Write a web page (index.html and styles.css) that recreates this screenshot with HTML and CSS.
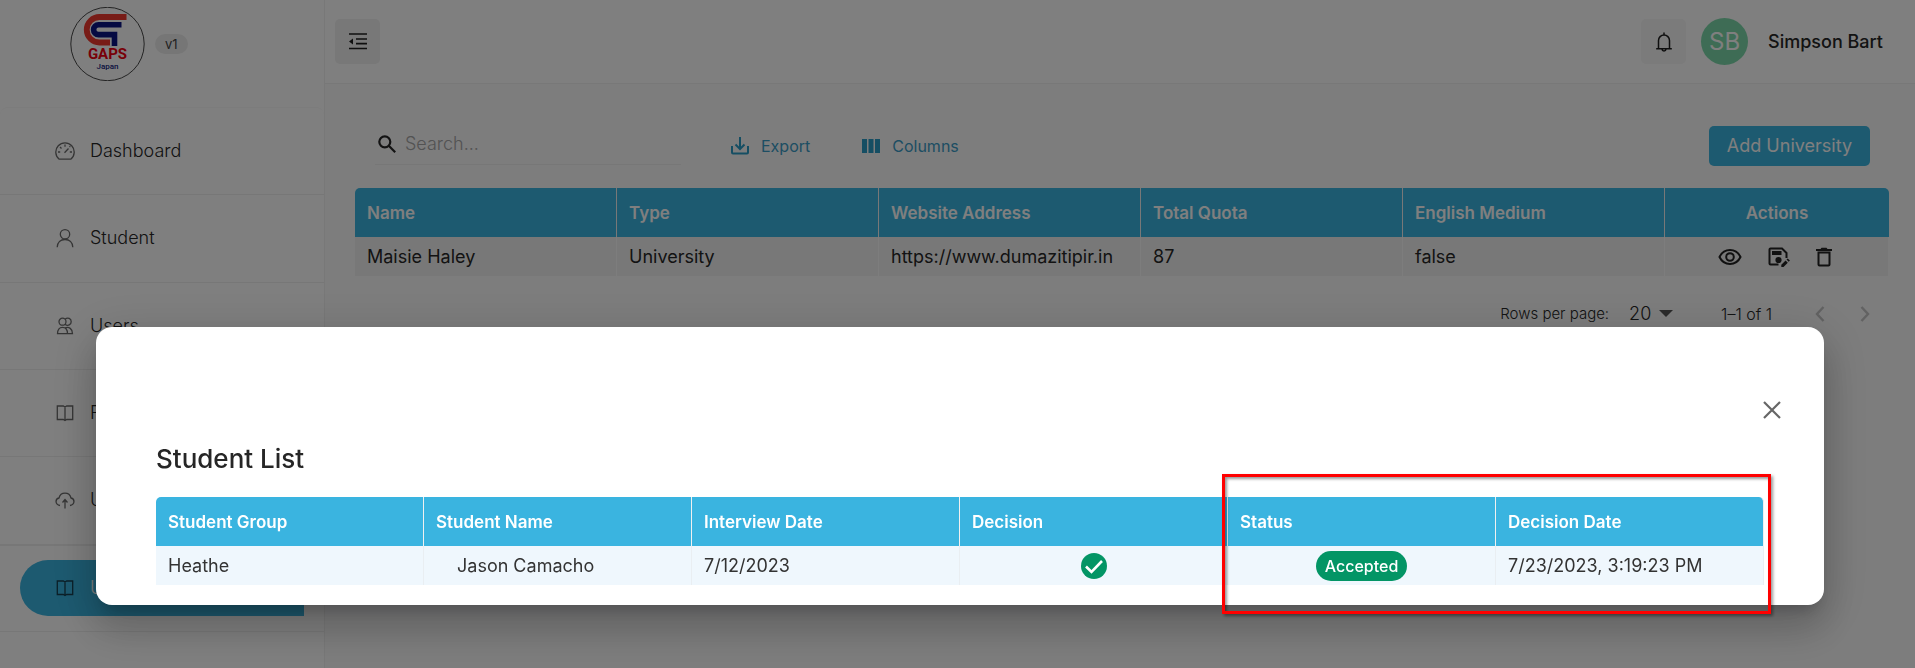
FILE: index.html
```html
<!DOCTYPE html>
<html lang="en">
<head>
<meta charset="utf-8">
<title>GAPS Japan - Universities</title>
<link rel="stylesheet" href="styles.css">
</head>
<body>
<div class="app">
  <aside class="sidebar">
    <div class="brand">
      <svg class="logo" viewBox="0 0 76 74" role="img" aria-label="GAPS Japan">
        <circle cx="37.500" cy="37" r="36.700" fill="none" stroke="#333" stroke-width="0.900"/>
        <path d="M56.500 10H29.500a12.700 12.700 0 0 0 0 25.500H40" fill="none" stroke="#f0392f" stroke-width="5.800"/>
        <path d="M51.500 17.800H28.500a4.800 4.800 0 0 0 0 9.800H44.500V39" fill="none" stroke="#0a1484" stroke-width="5.600"/>
        <text class="logo-name" x="37.500" y="52" text-anchor="middle">GAPS</text>
        <text class="logo-sub" x="37.500" y="62" text-anchor="middle">Japan</text>
      </svg>
      <span class="version">v1</span>
    </div>
    <nav>
      <ul class="menu">
        <li><a href="#"><svg class="ico" viewBox="0 0 20 20"><path d="M4.200 18.200A9.200 9.200 0 1 1 15.800 18.200Z"/><path d="M10 3.500v2.200M3 11h2.200M14.800 11H17M5 6l1.500 1.500M9.500 11.700l4-4.200M14.500 6l.8-.8"/></svg>Dashboard</a></li>
        <li><a href="#"><svg class="ico" viewBox="0 0 20 20"><circle cx="10" cy="6.300" r="4.700"/><path d="M2.200 19.200c.2-4.800 3.400-7.700 7.800-7.700s7.600 2.900 7.800 7.700"/></svg>Student</a></li>
        <li><a href="#"><svg class="ico" viewBox="0 0 20 20"><circle cx="7.500" cy="5.700" r="3.500"/><path d="M10 3.300c3-2.800 6.200-.3 6.200 2.400S13 10.800 10 8.200M2.500 17.700c0-4 1.700-6.300 5-6.300s5 2.300 5 6.300ZM10 11.900c4-1.400 7.500.8 7.500 5.800h-5"/></svg>Users</a></li>
        <li><a href="#"><svg class="ico" viewBox="0 0 20 20"><path d="M2.300 3h6l1.700 1 1.700-1h6v13.500h-6L10 17.500l-1.700-1h-6ZM10 4v13"/></svg>Faculty</a></li>
        <li><a href="#"><svg class="ico" viewBox="0 0 20 20"><path d="M5 15.500C-.2 14.500 0 9 4 8c1.500-6.500 10.500-6.500 12 0 4 1 4.200 6.500-1 7.500M10 18.500v-8M7.500 12.500l2.500-3 2.500 3"/></svg>Upload</a></li>
        <li class="current"><a href="#" aria-current="page"><svg class="ico" viewBox="0 0 20 20"><path d="M2.300 3h6l1.700 1 1.700-1h6v13.500h-6L10 17.500l-1.700-1h-6ZM10 4v13"/></svg>University</a></li>
      </ul>
    </nav>
  </aside>

  <div class="page">
    <header class="topbar">
      <button class="square collapse" aria-label="Collapse menu">
        <svg width="18" height="18" viewBox="0 0 18 18" fill="none" stroke="#1f1f1f" stroke-width="1.700"><path d="M0 1h18M7 6h11M7 10.700h11M0 15.500h18"/><path d="M0 8.400l4-3v6z" fill="#1f1f1f" stroke="none"/></svg>
      </button>
      <div class="account">
        <button class="square bell" aria-label="Notifications">
          <svg width="18" height="20" viewBox="0 0 18 20" fill="none" stroke="#1f1f1f" stroke-width="1.500"><path d="M1.200 16.800h15.600M3.500 16.800V8.500a5.500 5.500 0 0 1 11 0v8.300M9 3V.5M7 17.200c.2 2.400 3.800 2.400 4 0"/></svg>
        </button>
        <span class="avatar">SB</span>
        <span class="person">Simpson Bart</span>
      </div>
    </header>

    <main class="content">
      <div class="toolbar">
        <label class="search">
          <svg width="18" height="18" viewBox="0 0 18 18" fill="none" stroke="#262626" stroke-width="2.200"><circle cx="6.800" cy="6.800" r="5.500"/><path d="M10.800 10.800l6.400 6.400"/></svg>
          <input type="search" placeholder="Search..." aria-label="Search">
        </label>
        <div class="tools">
          <button class="tool"><svg width="18" height="18" viewBox="0 0 18 18" fill="none" stroke="currentColor" stroke-width="2"><path d="M1 9v6.500q0 1 1 1h14q1 0 1-1V9M9 0v11.500M4.500 7.500L9 12l4.500-4.500"/></svg>Export</button>
          <button class="tool"><svg width="18" height="18" viewBox="0 0 18 18" fill="currentColor"><path d="M0 2h5v14H0zM6.500 2h5v14h-5zM13 2h5v14h-5z"/></svg>Columns</button>
        </div>
        <button class="add">Add University</button>
      </div>

      <table class="grid universities">
        <thead><tr><th>Name</th><th>Type</th><th>Website Address</th><th>Total Quota</th><th>English Medium</th><th class="actions-col">Actions</th></tr></thead>
        <tbody><tr>
          <td>Maisie Haley</td><td>University</td><td>https://www.dumazitipir.in</td><td>87</td><td>false</td>
          <td><div class="actions">
            <button aria-label="View"><svg width="24" height="20" viewBox="0 0 24 20" fill="none" stroke="#222" stroke-width="2"><path d="M1.500 10C6 .7 18 .7 22.500 10 18 19.300 6 19.300 1.500 10Z"/><circle cx="12" cy="10" r="3.800"/></svg></button>
            <button aria-label="Edit"><svg width="22" height="22" viewBox="0 0 22 22"><path d="M10.500 18.500H2.500q-1 0-1-1v-14q0-1 1-1H14L18.500 7v5" fill="none" stroke="#222" stroke-width="2"/><path d="M4 5h9.500v4H4zM13.300 18.800v2.200h2.200l4.300-4.300-2.200-2.200zM18.500 13.600l1.200-1.200 2.200 2.200-1.200 1.200z" fill="#222"/><circle cx="10.500" cy="14" r="3.100" fill="#222"/></svg></button>
            <button aria-label="Delete"><svg width="16" height="20" viewBox="0 0 16 20"><path d="M0 2h4.500l1-1.200h5l1 1.200H16v2H0z" fill="#222"/><path d="M2.500 5.500h11v12q0 1-1 1h-9q-1 0-1-1z" fill="none" stroke="#222" stroke-width="2"/></svg></button>
          </div></td>
        </tr></tbody>
      </table>

      <div class="pager">
        <label for="page-size">Rows per page:</label>
        <span class="size">
          <select id="page-size"><option>20</option><option>50</option></select>
          <svg width="14" height="8" viewBox="0 0 14 8"><path d="M0 0h14L7 7z" fill="#555"/></svg>
        </span>
        <span class="range">1–1 of 1</span>
        <button aria-label="Previous page" disabled><svg width="10" height="16" viewBox="0 0 10 16"><path d="M8.500 1L2 8l6.500 7"/></svg></button>
        <button aria-label="Next page" disabled><svg width="10" height="16" viewBox="0 0 10 16"><path d="M1.500 1L8 8l-6.500 7"/></svg></button>
      </div>
    </main>
  </div>
</div>

<div class="backdrop">
  <section class="dialog" role="dialog" aria-modal="true" aria-labelledby="dialog-title">
    <button class="close" aria-label="Close"><svg width="18" height="18" viewBox="0 0 18 18"><path d="M1 1l16 16M17 1L1 17"/></svg></button>
    <h2 id="dialog-title">Student List</h2>
    <table class="grid students">
      <thead><tr><th>Student Group</th><th>Student Name</th><th>Interview Date</th><th>Decision</th><th>Status</th><th>Decision Date</th></tr></thead>
      <tbody><tr>
        <td>Heathe</td><td class="indent">Jason Camacho</td><td>7/12/2023</td>
        <td class="center"><svg class="check" viewBox="0 0 26 26" role="img" aria-label="Yes"><circle cx="13" cy="13" r="13" fill="#039565"/><path d="M5 13.500l5.500 5.500L21 8" fill="none" stroke="#fff" stroke-width="2.600"/></svg></td>
        <td class="center"><span class="pill">Accepted</span></td>
        <td>7/23/2023, 3:19:23 PM</td>
      </tr></tbody>
    </table>
    <div class="highlight"></div>
  </section>
</div>
</body>
</html>
```
FILE: styles.css
```css
* { box-sizing: border-box; }
body {
  margin: 0;
  font-family: Inter, "Liberation Sans", sans-serif;
  font-size: 18px;
  line-height: 24px;
  color: #262626;
  background: #fafafb;
  overflow: hidden;
}
button, input, select { font: inherit; color: inherit; }
button { border: 0; padding: 0; background: none; cursor: pointer; }
svg { display: block; flex: none; }

.app { display: flex; min-height: 100vh; }

.sidebar { flex: none; width: 325px; background: #fff; border-right: 1px solid #f0f0f0; }
.brand { display: flex; align-items: center; gap: 9px; padding: 7px 0 26px 70px; }
.logo { width: 76px; height: 74px; }
.logo-name { font: 700 15px Roboto, sans-serif; fill: #f00010; }
.logo-sub { font: 500 8px Roboto, sans-serif; fill: #141c80; }
.version { padding: 0 10px; border-radius: 10px; background: #ededed; font-size: 13px; line-height: 20px; color: #444; }

.menu {
  display: grid;
  grid-auto-rows: 1fr;
  min-height: 525px;
  margin: 0;
  padding: 0;
  list-style: none;
  border-top: 1px solid #f8f8f8;
  border-radius: 8px;
}
.menu li { display: grid; align-items: center; border-bottom: 1px solid #efefef; }
.menu a { display: flex; align-items: center; gap: 15px; padding: 16px 20px 16px 55px; color: #262626; font-weight: 300; text-decoration: none; }
.ico { width: 20px; height: 20px; fill: none; stroke: #6a6a6a; stroke-width: 1.3px; }
.menu .current { border-top: 1px solid #efefef; padding: 0 20px; }
.menu .current a { padding-left: 35px; border-radius: 28px 0 0 28px; background: #3ab4e0; color: #fff; }
.current .ico { stroke: #173f50; }

.page { flex: 1; min-width: 0; }
.topbar { display: flex; align-items: center; justify-content: space-between; height: 84px; padding: 0 32px 0 10px; background: #fff; border-bottom: 1px solid #f0f0f0; }
.square { display: grid; place-items: center; width: 45px; height: 45px; border-radius: 5px; }
.collapse { background: #f0f0f0; }
.bell { background: #f6f6f6; }
.account { display: flex; align-items: center; gap: 15px; }
.avatar { display: grid; place-items: center; width: 47px; height: 47px; border-radius: 50%; background: #7dd9aa; color: #fff; font-size: 24px; }
.person { margin-left: 5px; font-weight: 500; }

.content { padding: 42px 26px 20px 30px; }
.toolbar { display: flex; align-items: center; padding: 0 19px 0 20px; }
.search { display: flex; align-items: center; gap: 9px; width: 306px; height: 37px; padding: 0 3px 4px; border-bottom: 1px solid #eee; }
.search input { flex: 1; min-width: 0; border: 0; padding: 0; background: none; outline: 0; font-weight: 300; }
.search input::placeholder { color: #a6a6a6; opacity: 1; }
.tools { display: flex; gap: 52px; margin-left: 50px; }
.tool { display: flex; align-items: center; gap: 12px; color: #3a9cc6; font-size: 16px; }
.tool svg { color: #2b9dc6; }
.add { margin-left: auto; padding: 8px 18px; border-radius: 5px; background: #3ab4e0; color: #fff; }

.grid { width: 100%; table-layout: fixed; border-collapse: separate; border-spacing: 0; }
.grid th { height: 49px; padding: 0 12px; background: #3ab4e0; border-right: 1px solid #f0f0f0; color: #fff; font-size: 17px; font-weight: 600; text-align: left; }
.grid td { height: 39px; padding: 0 12px; border-right: 1px solid #e9eef2; white-space: nowrap; }
.grid th:first-child { border-top-left-radius: 5px; }
.grid th:last-child { border-top-right-radius: 5px; }
.universities { margin-top: 22px; }
.universities td { background: #f1f1f1; border-color: #fafafa; }
.universities th:last-child { border-right: 0; }
.grid .actions-col { width: 224px; text-align: center; }
.actions { display: flex; align-items: center; justify-content: center; gap: 26px; padding-right: 4px; }

.pager { display: flex; align-items: center; justify-content: flex-end; padding: 26px 19px 0 0; font-size: 16px; font-weight: 300; }
.pager label { font-size: 15px; }
.size { display: flex; align-items: center; gap: 7px; margin: 0 48px 0 20px; font-size: 18px; }
.size select { appearance: none; border: 0; padding: 0; background: none; }
.range { margin-right: 43px; }
.pager button + button { margin-left: 35px; }
.pager button path { fill: none; stroke: #c4c4c4; stroke-width: 2.4px; }

.backdrop { position: fixed; inset: 0; padding: 327px 91px 0 96px; background: rgba(0, 0, 0, 0.5); }
.dialog {
  position: relative;
  display: flex;
  flex-direction: column;
  padding: 74px 60px 20px;
  border-radius: 16px;
  background: #fff;
  box-shadow: 0 11px 15px -7px rgba(0, 0, 0, 0.2), 0 24px 38px 3px rgba(0, 0, 0, 0.14), 0 9px 46px 8px rgba(0, 0, 0, 0.12);
}
.close { align-self: flex-end; margin-right: -17px; }
.close path { fill: none; stroke: #666; stroke-width: 2.2px; }
.dialog h2 { margin: 24px 0 22px; font-size: 26px; line-height: 32px; font-weight: 500; }
.students td { background: #eff7fd; color: #333; }
.students .indent { padding-left: 33px; }
.students .center { text-align: center; }
.check { width: 26px; height: 26px; margin: 0 auto; }
.pill { display: inline-block; padding: 3px 9px; border-radius: 15px; background: #039565; color: #fff; font-size: 16px; font-weight: 500; }
.highlight {
  position: absolute;
  top: 147px;
  right: 53px;
  bottom: -9px;
  width: 549px;
  border: 3px solid #f00;
  box-shadow: 2px 2px 3px rgba(0, 0, 0, 0.4), inset 2px 2px 3px rgba(0, 0, 0, 0.4);
}
```
